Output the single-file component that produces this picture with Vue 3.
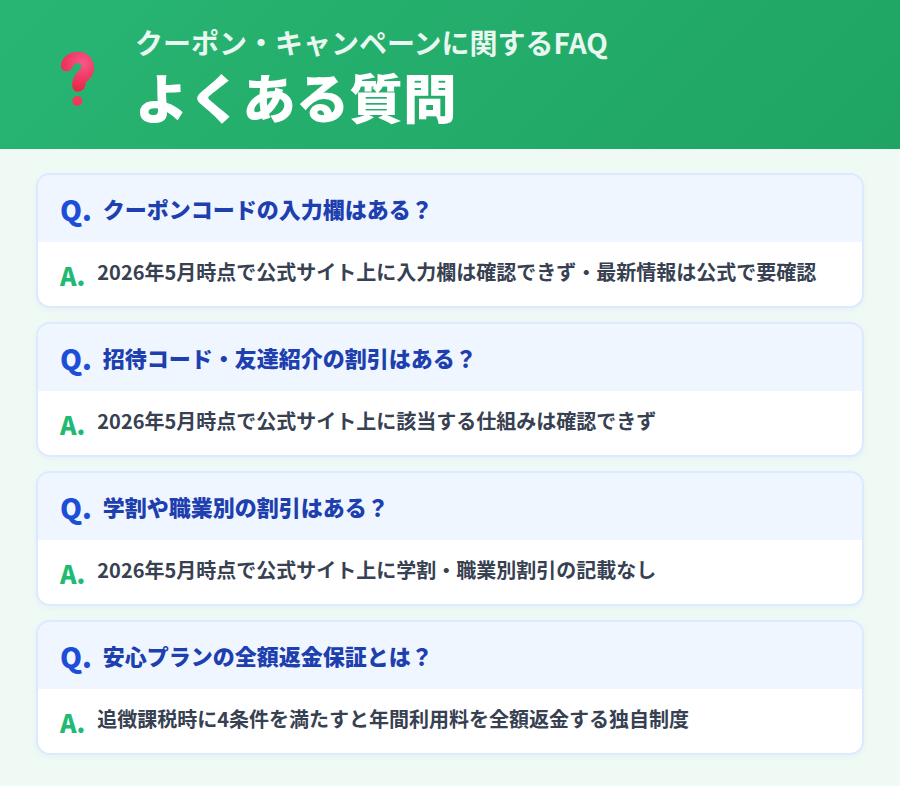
<template>
  <div class="page">
    <header class="hero">
      <svg class="hero-icon" width="38" height="56" viewBox="57 36 114 168" aria-hidden="true">
        <defs>
          <radialGradient id="qm" gradientUnits="userSpaceOnUse" cx="128" cy="72" r="92">
            <stop offset="0" stop-color="#f6588a" />
            <stop offset="0.5" stop-color="#ef3a63" />
            <stop offset="1" stop-color="#e8213f" />
          </radialGradient>
        </defs>
        <path
          d="M63 80 C63 55 88 38 115 38 C143 38 162 60 162 88 C162 108 150 120 138 130 C136 150 125 158 113 158 C102 158 96 148 97 135 C98 115 108 103 118 93 C124 87 127 82 122 76 C118 72 110 72 104 76 C98 82 98 92 86 96 C74 100 63 92 63 80 Z"
          fill="url(#qm)"
        />
        <circle cx="112" cy="186" r="15" fill="#f03a5c" />
      </svg>
      <div class="hero-text">
        <p class="hero-sub">クーポン・キャンペーンに関するFAQ</p>
        <h1 class="hero-title">よくある質問</h1>
      </div>
    </header>

    <main class="faq-list">
      <section v-for="item in faqs" :key="item.q" class="faq-card">
        <div class="faq-q">
          <span class="q-mark">Q.</span>
          <span class="q-text">{{ item.q }}</span>
        </div>
        <div class="faq-a">
          <span class="a-mark">A.</span>
          <span class="a-text">{{ item.a }}</span>
        </div>
      </section>
    </main>
  </div>
</template>

<script setup>
const faqs = [
  {
    q: 'クーポンコードの入力欄はある？',
    a: '2026年5月時点で公式サイト上に入力欄は確認できず・最新情報は公式で要確認'
  },
  {
    q: '招待コード・友達紹介の割引はある？',
    a: '2026年5月時点で公式サイト上に該当する仕組みは確認できず'
  },
  {
    q: '学割や職業別の割引はある？',
    a: '2026年5月時点で公式サイト上に学割・職業別割引の記載なし'
  },
  {
    q: '安心プランの全額返金保証とは？',
    a: '追徴課税時に4条件を満たすと年間利用料を全額返金する独自制度'
  }
];
</script>

<style>
body {
  margin: 0;
  background: #f0f9f5;
}
</style>

<style scoped>
.page {
  width: 900px;
  height: 786px;
  overflow: hidden;
  background: #f0faf5;
  font-family: "Noto Sans CJK JP", "Noto Sans", sans-serif;
}

.hero {
  height: 149px;
  box-sizing: border-box;
  padding: 6px 0 0 59px;
  display: flex;
  align-items: center;
  background: linear-gradient(135deg, #28b573 0%, #1fa463 100%);
}

.hero-icon {
  flex: none;
  margin-top: 3px;
}

.hero-text {
  margin-left: 38px;
  display: flex;
  flex-direction: column;
}

.hero-sub {
  margin: 0;
  font-size: 28px;
  line-height: 36px;
  font-weight: 700;
  color: #e8f8f0;
}

.hero-title {
  margin: 0;
  font-size: 53.6px;
  line-height: 72px;
  font-weight: 900;
  color: #fff;
}

.faq-list {
  padding: 24px 36px 0;
  display: flex;
  flex-direction: column;
  gap: 14px;
}

.faq-card {
  height: 135px;
  box-sizing: border-box;
  border: 2px solid #dbeafe;
  border-radius: 14px;
  background: #fff;
  overflow: hidden;
  box-shadow: 0 2px 10px rgba(30, 64, 175, 0.05);
}

.faq-q {
  height: 67px;
  padding: 0 22px;
  display: flex;
  align-items: center;
  gap: 11px;
  background: #eff6ff;
}

.q-mark {
  font-size: 28px;
  font-weight: 900;
  color: #1d4ed8;
}

.q-text {
  font-size: 22px;
  font-weight: 900;
  color: #1e40af;
  margin-bottom: 2px;
}

.faq-a {
  height: 64px;
  padding: 0 22px;
  display: flex;
  align-items: center;
  gap: 12px;
}

.a-mark {
  font-size: 25px;
  font-weight: 900;
  color: #21ba75;
  margin-top: 1px;
}

.a-text {
  font-size: 20px;
  font-weight: 700;
  color: #374151;
  margin-bottom: 5px;
}
</style>
